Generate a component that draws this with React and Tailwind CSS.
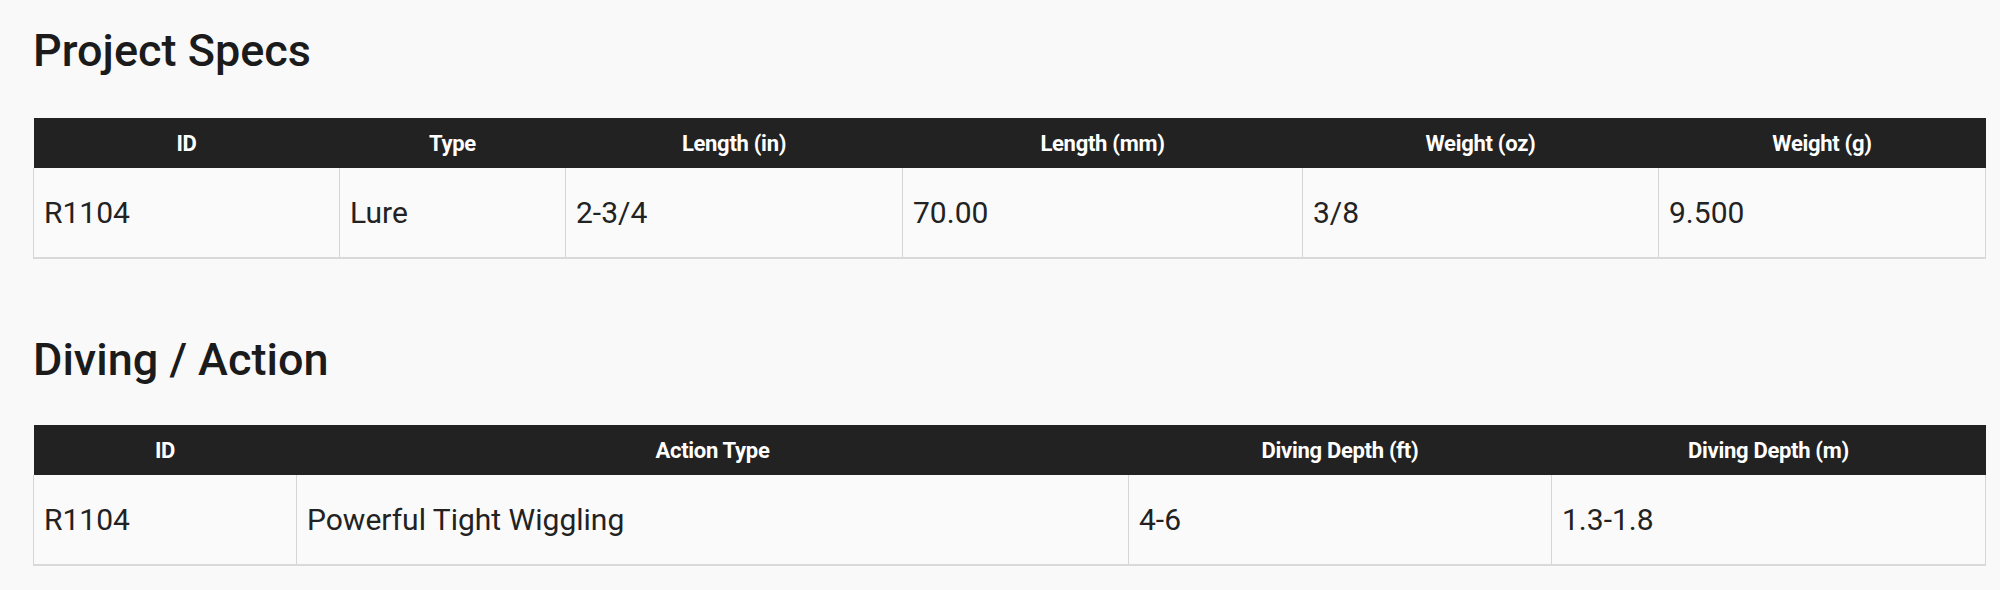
const specs = {
    cols: ["w-[306px]", "w-[226px]", "w-[337px]", "w-[400px]", "w-[356px]", "w-[327px]"],
    head: ["ID", "Type", "Length (in)", "Length (mm)", "Weight (oz)", "Weight (g)"],
    row: ["R1104", "Lure", "2-3/4", "70.00", "3/8", "9.500"],
};

const diving = {
    cols: ["w-[263px]", "w-[832px]", "w-[423px]", "w-[434px]"],
    head: ["ID", "Action Type", "Diving Depth (ft)", "Diving Depth (m)"],
    row: ["R1104", "Powerful Tight Wiggling", "4-6", "1.3-1.8"],
};

function SpecTable({cols, head, row}) {
    return (
        <table className="w-full table-fixed border-collapse">
            <colgroup>
                {cols.map((c, i) => (
                    <col key={i} className={c}/>
                ))}
            </colgroup>
            <thead>
            <tr className="bg-[#222222]">
                {head.map((h) => (
                    <th
                        key={h}
                        className="h-[50px] p-0 text-center align-middle text-[22px] font-bold tracking-[-0.3px] text-white"
                    >
                        {h}
                    </th>
                ))}
            </tr>
            </thead>
            <tbody>
            <tr>
                {row.map((v, i) => (
                    <td
                        key={i}
                        className="h-[90px] border-x border-b-2 border-x-[#d6d6d6] border-b-[#d9d9d9] bg-[#fafafa] px-[10px] align-middle text-[30px] text-[#222222]"
                    >
                        {v}
                    </td>
                ))}
            </tr>
            </tbody>
        </table>
    );
}

export default function App() {
    return (
        <div className="min-h-[590px] bg-[#f9f9f9] pt-[28px] pl-[33px] pr-[15px] font-['Roboto','Liberation_Sans',sans-serif]">
            {/*project specs*/}
            <h2 className="text-[45px] leading-[45px] font-medium text-[#1b1b1b]">Project Specs</h2>
            <div className="mt-[45px]">
                <SpecTable {...specs}/>
            </div>
            {/*diving / action*/}
            <h2 className="mt-[78px] text-[45px] leading-[45px] font-medium text-[#1b1b1b]">Diving / Action</h2>
            <div className="mt-[43px]">
                <SpecTable {...diving}/>
            </div>
        </div>
    );
}
